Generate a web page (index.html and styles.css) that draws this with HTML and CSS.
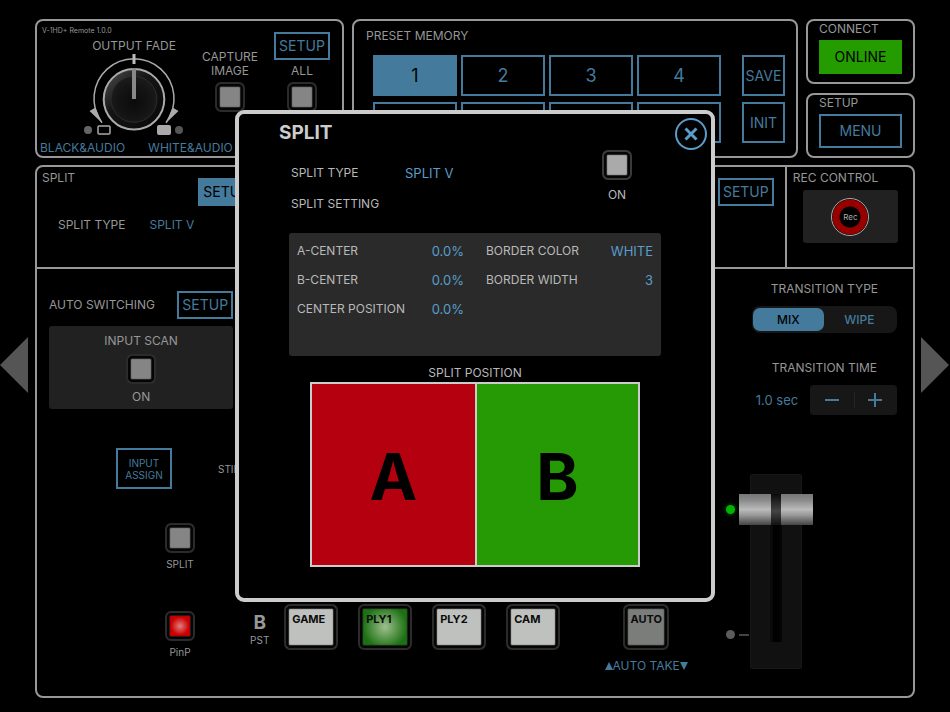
FILE: index.html
```html
<!DOCTYPE html>
<html lang="en">
<head>
<meta charset="utf-8">
<meta name="viewport" content="width=device-width, initial-scale=1">
<title>V-1HD+ Remote</title>
<link rel="stylesheet" href="styles.css">
</head>
<body>
<div class="page">
  <button class="pager" aria-label="Previous page"><svg width="28" height="56" viewBox="0 0 28 56"><path d="M28 0v56L0 28z"/></svg></button>

  <main class="console">
    <div class="top">
      <section class="panel output">
        <span class="version">V-1HD+ Remote 1.0.0</span>
        <div class="dial">
          <h2 class="caption">OUTPUT FADE</h2>
          <svg width="108" height="86" viewBox="0 0 108 86" role="img" aria-label="Output fade knob">
            <defs>
              <radialGradient id="cap" cx="50%" cy="55%" r="50%"><stop offset="0" stop-color="#0b0b0b"/><stop offset=".7" stop-color="#141414"/><stop offset="1" stop-color="#1a1a1a"/></radialGradient>
              <linearGradient id="rim" x1="0" y1="0" x2="1" y2="1"><stop offset="0" stop-color="#555"/><stop offset=".4" stop-color="#151515"/><stop offset="1" stop-color="#080808"/></linearGradient>
            </defs>
            <path d="M22 68.700A40 40 0 1 1 86 68.700" fill="none" stroke="#aaa" stroke-width="1.500"/>
            <path d="M9.500 57l6-3.500 6.500 15.500zM98.500 57l-6-3.500-6.500 15.500z" fill="#aaa"/>
            <circle cx="54" cy="45.300" r="30.300" fill="url(#rim)" stroke="#aaa" stroke-width="2"/>
            <circle cx="54" cy="45.300" r="23" fill="url(#cap)" stroke="#2c2c2c"/>
            <path d="M54 0v10" stroke="#bbb" stroke-width="3"/>
            <path d="M54 14v31" stroke="#888" stroke-width="4"/>
            <circle cx="8" cy="76" r="4" fill="#666"/>
            <rect x="18" y="72" width="12" height="8" rx="1" fill="none" stroke="#aaa" stroke-width="1.500"/>
            <rect x="77" y="71" width="14" height="10" rx="2" fill="#aaa"/>
            <circle cx="99" cy="76" r="4" fill="#555"/>
          </svg>
        </div>
        <div class="unit capture">
          <label class="caption" for="capture">CAPTURE<br>IMAGE</label>
          <button class="pad" id="capture"></button>
        </div>
        <div class="unit all">
          <button class="box setup">SETUP</button>
          <label class="caption" for="all">ALL</label>
          <button class="pad" id="all"></button>
        </div>
        <div class="fades"><button class="plain">BLACK&amp;AUDIO</button><button class="plain">WHITE&amp;AUDIO</button></div>
      </section>

      <section class="panel preset">
        <h2 class="caption">PRESET MEMORY</h2>
        <div class="memories">
          <div class="slots">
            <button class="box num selected">1</button>
            <button class="box num">2</button>
            <button class="box num">3</button>
            <button class="box num">4</button>
            <button class="box num" aria-label="Memory 5"></button>
            <button class="box num" aria-label="Memory 6"></button>
            <button class="box num" aria-label="Memory 7"></button>
            <button class="box num" aria-label="Memory 8"></button>
          </div>
          <div class="actions">
            <button class="box">SAVE</button>
            <button class="box">INIT</button>
          </div>
        </div>
      </section>

      <div class="side">
        <section class="panel small"><h2 class="caption">CONNECT</h2><button class="box online">ONLINE</button></section>
        <section class="panel small"><h2 class="caption">SETUP</h2><button class="box">MENU</button></section>
      </div>
    </div>

    <div class="panel deck">
      <div class="strip">
        <section class="split">
          <h2 class="caption">SPLIT</h2>
          <button class="box setup selected">SETUP</button>
          <div class="type"><span class="caption">SPLIT TYPE</span><button class="plain">SPLIT V</button></div>
        </section>
        <section class="pinp"><button class="box setup">SETUP</button></section>
        <section class="rec">
          <h2 class="caption">REC CONTROL</h2>
          <div class="tray"><button class="rec-button">Rec</button></div>
        </section>
      </div>

      <div class="lower">
        <section class="auto-col">
          <div class="auto-head"><h2 class="caption">AUTO SWITCHING</h2><button class="box setup">SETUP</button></div>
          <div class="scan tray">
            <span class="caption">INPUT SCAN</span>
            <button class="pad" id="scan"></button>
            <label class="caption" for="scan">ON</label>
          </div>
          <div class="assign"><button class="box">INPUT<br>ASSIGN</button><span class="tiny">STILL</span></div>
          <div class="effects">
            <div class="unit"><button class="pad" id="fx-split"></button><label class="tiny" for="fx-split">SPLIT</label></div>
            <div class="unit"><button class="pad red" id="fx-pinp"></button><label class="tiny" for="fx-pinp">PinP</label></div>
          </div>
        </section>

        <section class="bus">
          <div class="bus-name"><b>B</b><span class="tiny">PST</span></div>
          <div class="sources">
            <button class="pad key">GAME</button>
            <button class="pad key green">PLY1</button>
            <button class="pad key">PLY2</button>
            <button class="pad key">CAM</button>
          </div>
          <div class="take"><button class="pad key auto">AUTO</button><button class="plain take-link"><svg width="8" height="8" viewBox="0 0 8 8"><path d="M4 0l4 8H0z"/></svg>AUTO TAKE<svg width="8" height="8" viewBox="0 0 8 8"><path d="M0 0h8L4 8z"/></svg></button></div>
        </section>

        <section class="transition">
          <div class="controls">
            <h2 class="caption">TRANSITION TYPE</h2>
            <div class="segments">
              <label><input type="radio" name="transition" checked>MIX</label>
              <label><input type="radio" name="transition">WIPE</label>
            </div>
            <h2 class="caption time-title">TRANSITION TIME</h2>
            <div class="time">
              <output>1.0 sec</output>
              <div class="stepper">
                <button aria-label="Decrease"><svg width="14" height="14" viewBox="0 0 14 14"><path d="M0 7h14"/></svg></button>
                <button aria-label="Increase"><svg width="14" height="14" viewBox="0 0 14 14"><path d="M0 7h14M7 0v14"/></svg></button>
              </div>
            </div>
          </div>
          <div class="fader">
            <div class="lamps"><i class="lamp lit"></i><i class="lamp"></i></div>
            <input type="range" min="0" max="100" value="100" aria-label="Transition fader">
          </div>
        </section>
      </div>
    </div>
  </main>

  <button class="pager" aria-label="Next page"><svg width="28" height="56" viewBox="0 0 28 56"><path d="M0 0v56l28-28z"/></svg></button>
</div>

<div class="overlay">
  <div class="dialog" role="dialog" aria-labelledby="dialog-title">
    <header>
      <h1 id="dialog-title">SPLIT</h1>
      <button class="close" aria-label="Close"><svg width="32" height="32" viewBox="0 0 32 32"><circle cx="16" cy="16" r="15"/><path d="M10.500 10.500l11 11M21.500 10.500l-11 11"/></svg></button>
    </header>
    <div class="intro">
      <span class="caption">SPLIT TYPE</span><button class="plain">SPLIT V</button>
      <span class="caption">SPLIT SETTING</span>
      <div class="unit"><button class="pad" id="split-on"></button><label class="caption" for="split-on">ON</label></div>
    </div>
    <div class="settings tray">
      <div class="fields">
        <span class="caption">A-CENTER</span><button class="plain">0.0%</button>
        <span class="caption">B-CENTER</span><button class="plain">0.0%</button>
        <span class="caption">CENTER POSITION</span><button class="plain">0.0%</button>
      </div>
      <div class="fields">
        <span class="caption">BORDER COLOR</span><button class="plain">WHITE</button>
        <span class="caption">BORDER WIDTH</span><button class="plain">3</button>
      </div>
    </div>
    <h2 class="caption position-title">SPLIT POSITION</h2>
    <div class="position"><div class="half a">A</div><div class="half b">B</div></div>
  </div>
</div>
</body>
</html>
```

FILE: styles.css
```css
:root {
  --line: #989898;
  --text: #979797;
  --blue: #447b9d;
  --tray: #212121;
}

* { box-sizing: border-box; }

body {
  margin: 0;
  background: #000;
  color: var(--text);
  font: 12px/16px Inter, "Liberation Sans", sans-serif;
}

h1, h2 { margin: 0; font-weight: 400; }
svg { display: block; }

button {
  margin: 0;
  padding: 0;
  border: 0;
  background: none;
  color: var(--blue);
  font: inherit;
}

.caption { font-size: 12px; line-height: 16px; white-space: nowrap; }
.tiny { font-size: 10px; line-height: 14px; }
.plain { font-size: 12px; line-height: 16px; white-space: nowrap; }

/* Page frame */
.page {
  display: grid;
  grid-template-columns: 35px 1fr 35px;
  min-height: 100vh;
  padding: 19px 0 14px;
}

.pager {
  display: flex;
  align-items: center;
  justify-content: flex-start;
  padding: 12px 0 0;
}
.pager:last-child { padding-left: 6px; }
.pager svg { fill: #555; }

.console { display: flex; flex-direction: column; gap: 7px; }
.panel { border: 2px solid var(--line); border-radius: 8px; }

.top {
  display: grid;
  grid-template-columns: 309fr 446fr 109fr;
  gap: 8px;
}

/* Controls */
.box {
  border: 2px solid var(--blue);
  font-size: 14px;
  line-height: 18px;
}
.box.setup { width: 56px; height: 28px; }
.box.selected { background: var(--blue); color: #000; }

.pad {
  width: 30px;
  height: 30px;
  border: 2px solid #2b2b29;
  border-radius: 6px;
  background: #858585;
  box-shadow: inset 0 0 0 2px #050505, inset 0 0 1px 3px #1a1a1a;
}
.pad.red {
  background: radial-gradient(circle, #e08080 0, #cc0000 9px);
}

.unit { display: flex; flex-direction: column; align-items: center; gap: 4px; }

/* Output fade */
.output {
  display: grid;
  grid-template-columns: 157fr 72fr 72fr;
  grid-template-rows: auto auto auto;
  padding: 5px 4px 0 0;
}
.version { grid-column: 1; padding-left: 5px; font-size: 7px; line-height: 10px; }
.dial {
  grid-area: 2 / 1;
  display: flex;
  flex-direction: column;
  align-items: center;
  padding: 2px 0 0 37px;
}
.output .unit { grid-row: 1 / 3; justify-content: flex-end; padding-bottom: 28px; text-align: center; }
.output .unit .caption { line-height: 14px; }
.output .capture { grid-column: 2; }
.output .all { grid-column: 3; }
.fades { grid-column: 1 / -1; display: flex; gap: 23px; padding-left: 3px; }

/* Presets */
.preset { padding: 7px 11px 0 12px; }
.memories { display: flex; gap: 21px; padding: 11px 0 0 7px; }
.slots { flex: 1; display: grid; grid-template-columns: repeat(4, 1fr); gap: 6px 4px; }
.actions { display: grid; gap: 6px; width: 43px; }
.slots .box, .actions .box { height: 41px; }
.num { font-size: 18px; }

/* Connect and setup */
.side { display: grid; gap: 9px; }
.small { display: grid; align-content: start; gap: 3px; padding: 0 11px 7px; }
.small .box { height: 34px; }
.box.online { border: 0; background: #249c00; color: #000; }

/* Deck */
.deck { flex: 1; display: flex; flex-direction: column; }
.strip {
  display: grid;
  grid-template-columns: 222fr 525fr 128fr;
  min-height: 102px;
  border-bottom: 2px solid var(--line);
}
.split {
  display: grid;
  grid-template-columns: 1fr auto;
  align-content: start;
  padding: 3px 5px 0 5px;
}
.split .setup { margin-top: 8px; }
.type { grid-column: 1 / -1; display: flex; gap: 24px; padding: 11px 0 0 16px; }
.pinp { padding: 11px; text-align: right; }
.rec { padding: 3px 15px 0 6px; border-left: 2px solid var(--line); }
.rec .tray { display: grid; place-items: center; height: 53px; margin: 4px 0 0 10px; }
.tray { border-radius: 3px; background: var(--tray); }
.rec-button {
  width: 38px;
  height: 38px;
  border: 1px solid #aaa;
  border-radius: 50%;
  background: radial-gradient(circle, #000 10px, #980000 11px 17px, #000 18px);
  color: #aaa;
  font-size: 8px;
}

.lower {
  flex: 1;
  display: grid;
  grid-template-columns: minmax(0, 197fr) minmax(0, 480fr) minmax(0, 198fr);
}

/* Auto switching */
.auto-col { padding: 22px 1px 0 12px; }
.auto-head { display: flex; align-items: center; justify-content: space-between; }
.scan { display: flex; flex-direction: column; align-items: center; gap: 5px; height: 83px; margin-top: 7px; padding-top: 7px; }
.assign { display: flex; align-items: center; gap: 46px; padding: 39px 0 0 67px; }
.assign .box { flex: none; width: 56px; height: 41px; font-size: 10px; line-height: 12px; }
.effects { display: grid; gap: 40px; width: 60px; margin: 34px 0 0 101px; }
.effects .unit { gap: 4px; }

/* Preset bus */
.bus { display: flex; align-self: end; align-items: flex-start; gap: 15px; padding: 0 27px 22px 16px; }
.bus-name { display: flex; flex-direction: column; align-items: center; width: 19px; padding-top: 7px; }
.bus-name b { font-size: 19px; line-height: 23px; }
.bus-name .tiny { line-height: 12px; }
.sources { display: flex; gap: 20px; }
.pad.key {
  width: 54px;
  height: 46px;
  padding: 0 0 17px 6px;
  background-color: #bfc1be;
  color: #0b0b0b;
  font-size: 11px;
  line-height: 14px;
  font-weight: 700;
  text-align: left;
}
.pad.key.green { background: radial-gradient(circle, #9fbf8f 0, #1c7112 22px); }
.pad.key.auto { width: 46px; padding-left: 0; background: #7b7d7b; text-align: center; }
.take { display: flex; flex-direction: column; align-items: center; gap: 8px; margin-left: auto; }
.take-link { display: flex; align-items: center; }
.take-link svg { fill: currentColor; }

/* Transition */
.controls { display: flex; flex-direction: column; padding: 12px 16px 0 37px; text-align: center; }
.segments {
  display: grid;
  grid-template-columns: 1fr 1fr;
  height: 27px;
  margin-top: 9px;
  padding: 2px 2px 2px 1px;
  border-radius: 8px;
  background: #171717;
  color: var(--blue);
  font-weight: 500;
}
.segments label { display: grid; place-items: center; border-radius: 7px; }
.segments input { position: absolute; opacity: 0; pointer-events: none; }
.segments label:has(:checked) { background: var(--blue); color: #000; }
.time-title { margin-top: 27px; }
.time { display: flex; align-items: center; justify-content: space-between; margin-top: 9px; padding-left: 4px; color: var(--blue); font-size: 13px; white-space: nowrap; }
.stepper { display: flex; width: 87px; height: 30px; border-radius: 4px; background: #171717; }
.stepper button { flex: 1; display: grid; place-items: center; }
.stepper button + button { background: linear-gradient(#262626, #262626) left / 1px 16px no-repeat; }
.stepper svg { fill: none; stroke: currentColor; stroke-width: 2; }

.fader {
  display: grid;
  grid-template-columns: 13px 74px;
  grid-template-rows: 20px 148px 27px;
  margin: 59px 0 0 11px;
}
.fader::before {
  content: "";
  grid-area: 1 / 2 / 4 / 3;
  justify-self: center;
  width: 50px;
  border: 1px solid #181818;
  border-radius: 2px;
  background: #101110;
}
.lamps { grid-area: 2 / 1; display: flex; flex-direction: column; justify-content: space-between; padding: 11px 0 3px; }
.lamp { display: flex; align-items: center; width: 9px; height: 9px; border-radius: 50%; background: #5b5d5b; }
.lamp.lit { background: #00b400; box-shadow: 0 0 5px #006400; }
.lamp:last-child::after { content: ""; flex: none; width: 10px; height: 2px; margin-left: 13px; background: #444; }

.fader input {
  grid-area: 2 / 2;
  appearance: none;
  writing-mode: vertical-lr;
  direction: rtl;
  width: 74px;
  height: 148px;
  margin: 0;
  background: linear-gradient(90deg, #0a0a0a 2px, #050505 3px, #000 3px 9px, #050505 10px) center / 12px 100% no-repeat;
}
.fader input::-webkit-slider-thumb {
  appearance: none;
  width: 74px;
  height: 31px;
  border: 0;
  background:
    linear-gradient(#0a0a0a, #444 55%, #111) center / 10px 100% no-repeat,
    linear-gradient(#777 0, #8a8a8a 20%, #bbb 50%, #999 68%, #444 100%);
}

/* Dialog */
.overlay { position: fixed; inset: 0; display: grid; place-items: center; }
.dialog {
  --text: #b9b9b9;
  --blue: #5a9dcb;
  width: 480px;
  height: 492px;
  border: 4px solid #ccc;
  border-radius: 9px;
  background: #000;
  color: var(--text);
}
.dialog header { display: flex; justify-content: space-between; padding: 4px 4px 0 40px; }
.dialog h1 { color: #ccc; font-size: 19px; line-height: 30px; font-weight: 700; }
.close svg { fill: none; stroke: var(--blue); stroke-width: 2; }
.close path { stroke-width: 3; }
.dialog .plain { font-size: 13px; }
.dialog .pad { background: #aaa; border-color: #3a3a3a; }

.intro {
  display: grid;
  grid-template-columns: 114px auto 1fr;
  grid-template-rows: 30px 32px;
  align-items: center;
  padding: 8px 79px 0 52px;
}
.intro .unit { grid-area: 1 / 3 / 3 / 4; justify-self: end; align-self: start; gap: 7px; margin-top: -8px; }
.settings {
  display: grid;
  grid-template-columns: 167px 167px;
  justify-content: space-between;
  align-items: start;
  height: 123px;
  margin: 13px 50px 0;
  padding: 3px 8px;
  background: #2a2a2a;
}
.fields { display: grid; grid-template-columns: 1fr auto; grid-auto-rows: 29px; align-items: center; }
.fields .plain { text-align: right; }
.position-title { margin-top: 9px; text-align: center; }
.position {
  display: grid;
  grid-template-columns: 1fr 1fr;
  height: 185px;
  margin: 1px 71px 0;
  border: 2px solid #ccc;
}
.half { display: grid; place-items: center; padding-top: 4px; color: #000; font-size: 64px; line-height: 64px; font-weight: 700; }
.half.a { background: #b5000f; }
.half.b { background: #259a05; border-left: 2px solid #ccc; }
```
